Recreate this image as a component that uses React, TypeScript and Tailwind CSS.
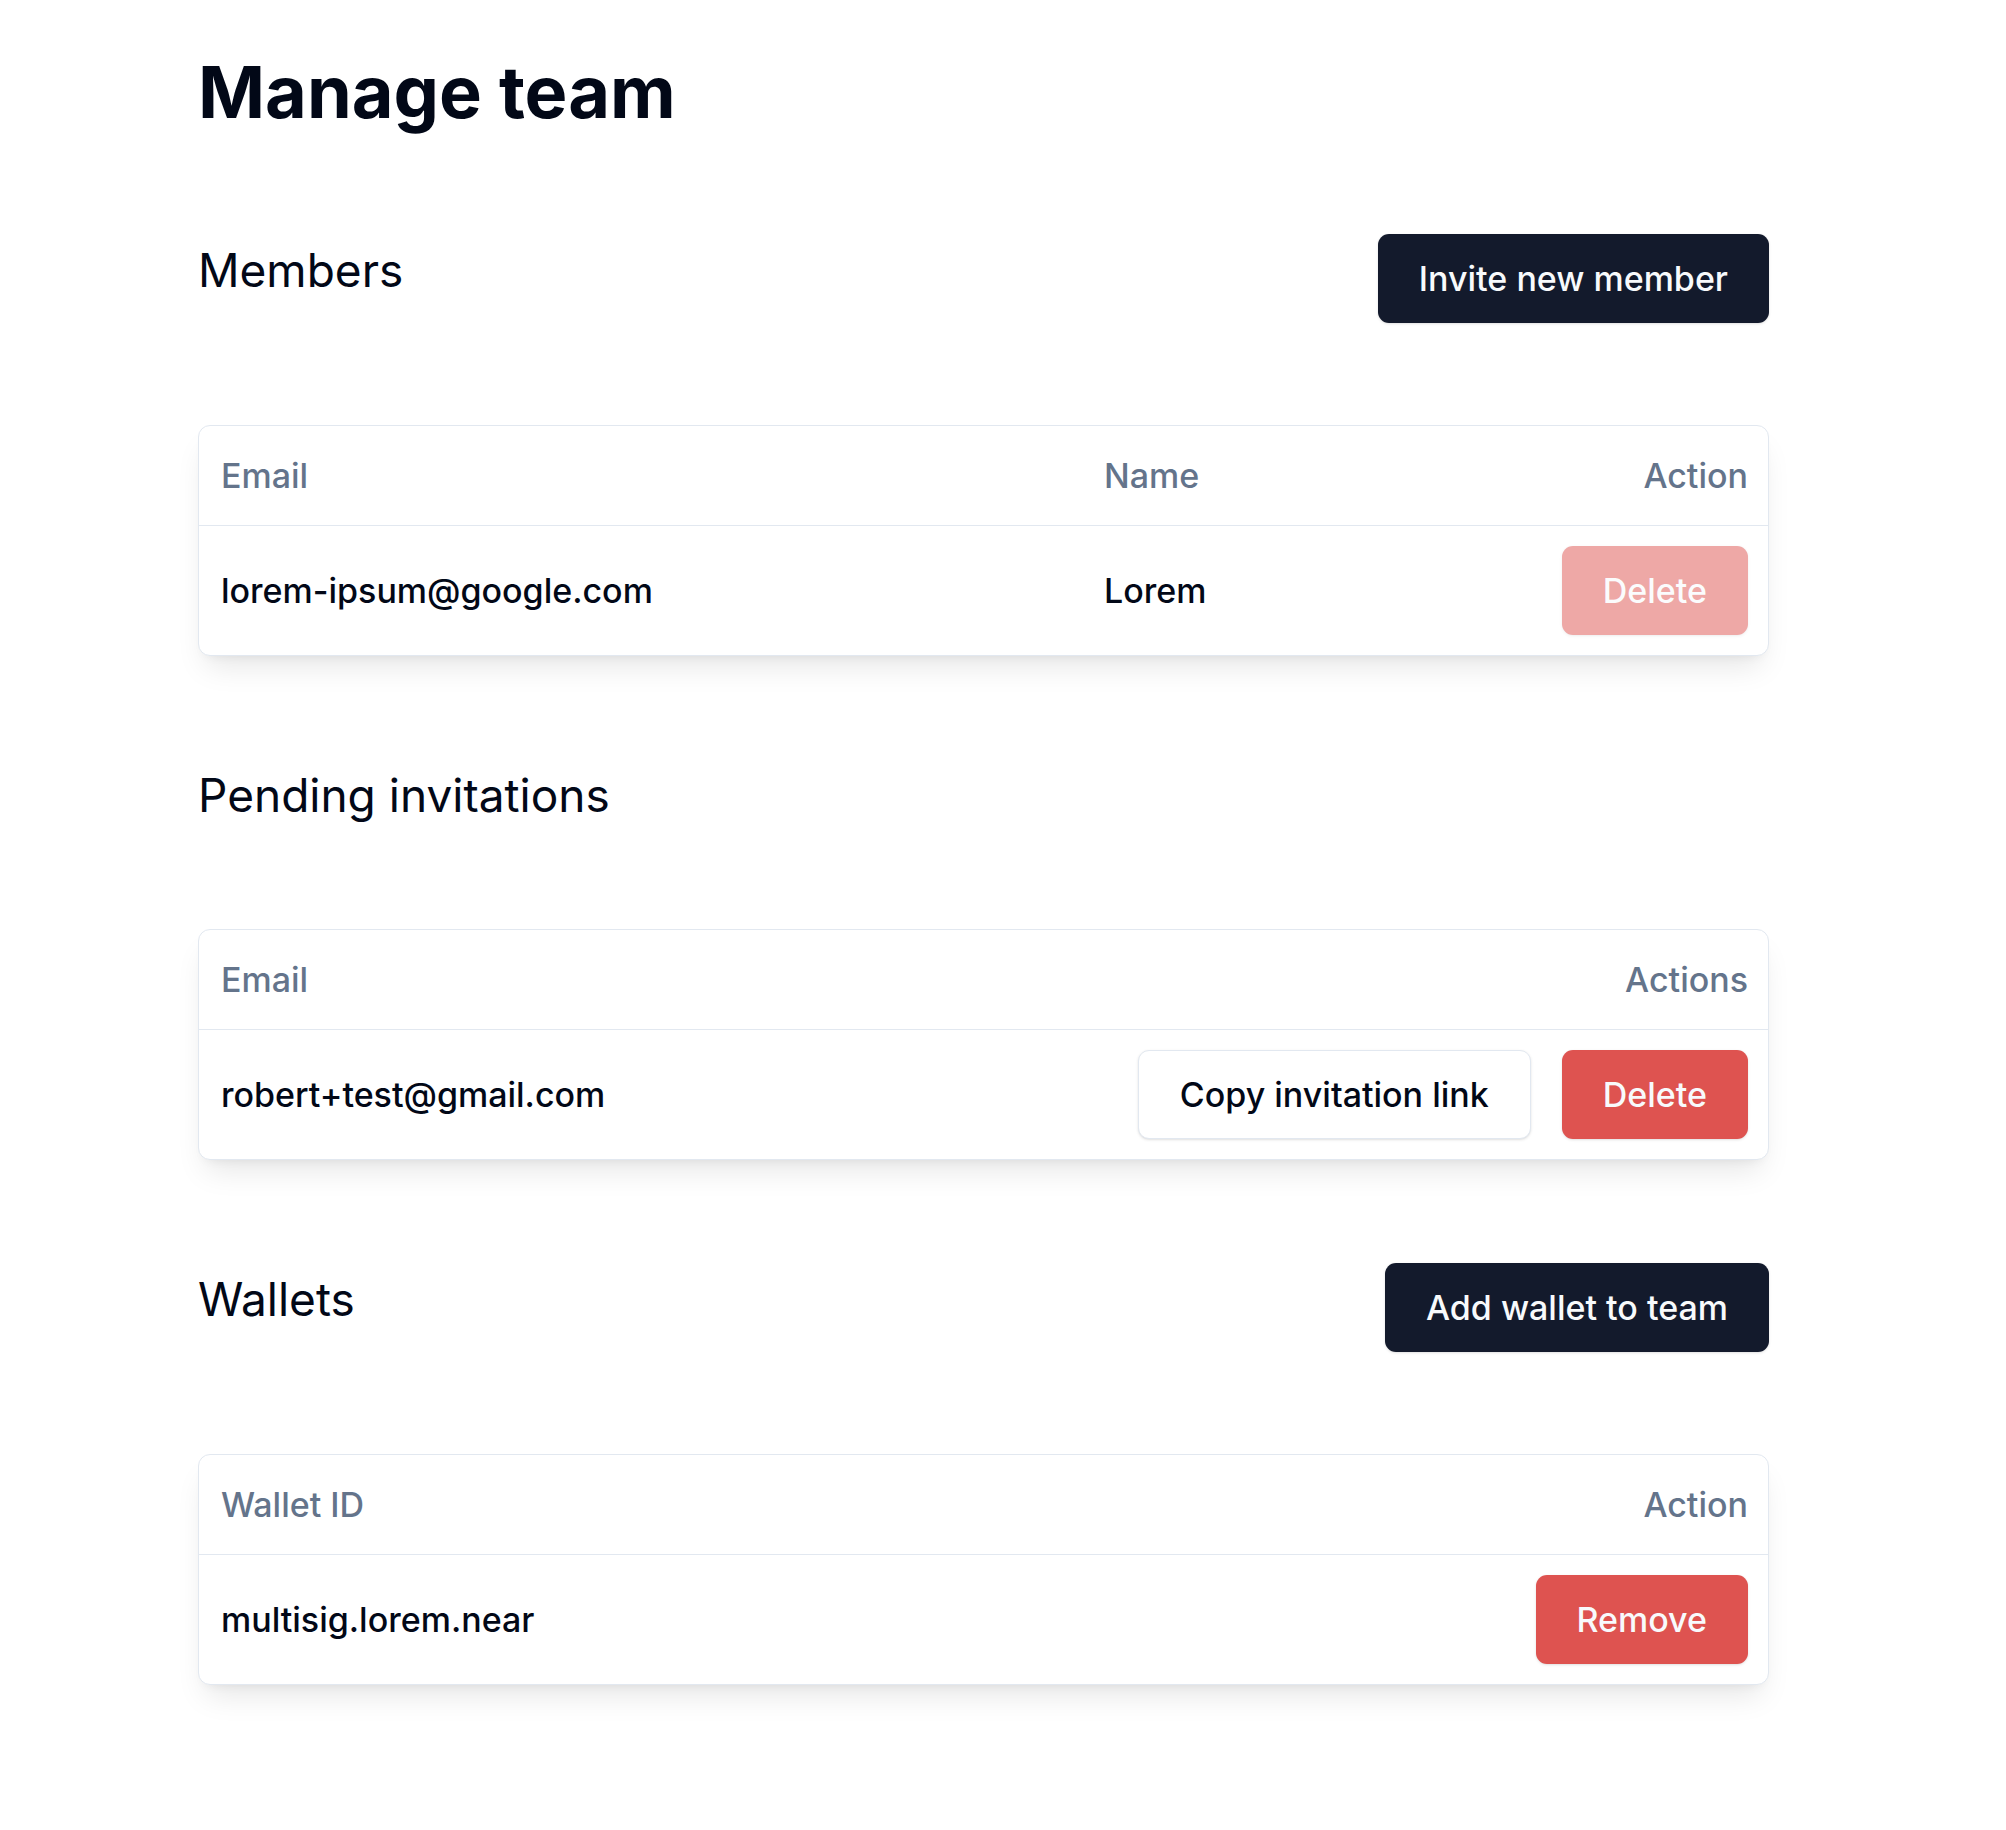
import React from "react";

const btnBase =
  "h-[89px] px-[41px] rounded-[11px] text-[34px] font-medium leading-none flex items-center justify-center shadow-sm whitespace-nowrap";

const darkBtn = btnBase + " bg-[#131a2c] text-[#f8fafc]";
const redBtn = btnBase + " bg-[#de5350] text-[#f8fafc]";
const outlineBtn = btnBase + " bg-white text-[#020817] border border-[#e2e8f0]";

function SectionHeader({ title, action }: { title: string; action?: string }) {
  return (
    <div className="flex items-start justify-between">
      <h2 className="mt-[4px] text-[46px] leading-[64px] font-normal text-[#020817]">{title}</h2>
      {action && <button className={darkBtn}>{action}</button>}
    </div>
  );
}

function Card({ children }: { children: React.ReactNode }) {
  return (
    <div className="mt-[102px] rounded-[12px] border border-[#e2e8f0] bg-white shadow-[0_18px_30px_-8px_rgba(0,0,0,0.10),0_6px_12px_-8px_rgba(0,0,0,0.10)] overflow-hidden">
      {children}
    </div>
  );
}

const headCell = "text-[34px] font-medium text-[#64748b] leading-none";
const bodyCell = "text-[34px] font-medium text-[#020817] leading-none";

export default function App() {
  return (
    <div className="min-h-screen bg-white font-['Inter',sans-serif]">
      <div className="ml-[198px] w-[1571px] pt-[56px] pb-[100px]">
        <h1 className="text-[72px] leading-[72px] font-bold text-[#020817]">Manage team</h1>

        {/* Members */}
        <div className="mt-[106px]">
          <SectionHeader title="Members" action="Invite new member" />
          <Card>
            <div className="grid grid-cols-[883px_1fr_auto] h-[100px] items-center border-b border-[#e2e8f0]">
              <div className={headCell + " px-[22px]"}>Email</div>
              <div className={headCell + " px-[22px]"}>Name</div>
              <div className={headCell + " px-[20px] text-right"}>Action</div>
            </div>
            <div className="grid grid-cols-[883px_1fr_auto] py-[20px] items-center">
              <div className={bodyCell + " px-[22px]"}>lorem-ipsum@google.com</div>
              <div className={bodyCell + " px-[22px]"}>Lorem</div>
              <div className="px-[20px] flex justify-end">
                <button disabled className={redBtn + " opacity-50 cursor-not-allowed"}>
                  Delete
                </button>
              </div>
            </div>
          </Card>
        </div>

        {/* Pending invitations */}
        <div className="mt-[103px]">
          <SectionHeader title="Pending invitations" />
          <Card>
            <div className="flex h-[100px] items-center justify-between border-b border-[#e2e8f0]">
              <div className={headCell + " px-[22px]"}>Email</div>
              <div className={headCell + " px-[20px] text-right"}>Actions</div>
            </div>
            <div className="flex py-[20px] items-center justify-between">
              <div className={bodyCell + " px-[22px]"}>robert+test@gmail.com</div>
              <div className="px-[20px] flex items-center gap-[31px]">
                <button className={outlineBtn}>Copy invitation link</button>
                <button className={redBtn}>Delete</button>
              </div>
            </div>
          </Card>
        </div>

        {/* Wallets */}
        <div className="mt-[103px]">
          <SectionHeader title="Wallets" action="Add wallet to team" />
          <Card>
            <div className="flex h-[100px] items-center justify-between border-b border-[#e2e8f0]">
              <div className={headCell + " px-[22px]"}>Wallet ID</div>
              <div className={headCell + " px-[20px] text-right"}>Action</div>
            </div>
            <div className="flex py-[20px] items-center justify-between">
              <div className={bodyCell + " px-[22px]"}>multisig.lorem.near</div>
              <div className="px-[20px] flex justify-end">
                <button className={redBtn}>Remove</button>
              </div>
            </div>
          </Card>
        </div>
      </div>
    </div>
  );
}
